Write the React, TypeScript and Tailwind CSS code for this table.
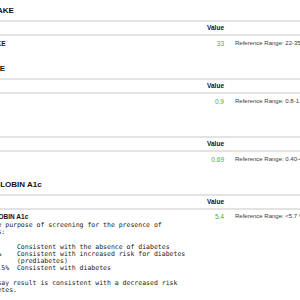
type LabResult = {
  title: string;
  value: string;
  range: string;
  note?: string[];
};

const results: LabResult[] = [
  { title: "T3 UPTAKE", value: "33", range: "Reference Range: 22-35 %" },
  { title: "T4, FREE", value: "0.9", range: "Reference Range: 0.8-1.8 ng/dL" },
  { title: "TSH", value: "0.69", range: "Reference Range: 0.40-4.50 mIU/L" },
  {
    title: "HEMOGLOBIN A1c",
    value: "5.4",
    range: "Reference Range: <5.7 % of total Hgb",
    note: [
      " For the purpose of screening for the presence of",
      "diabetes:",
      "",
      "<5.7%       Consistent with the absence of diabetes",
      "5.7-6.4%    Consistent with increased risk for diabetes",
      "            (prediabetes)",
      "> or =6.5%  Consistent with diabetes",
      "",
      "This assay result is consistent with a decreased risk",
      "of diabetes.",
    ],
  },
];

function ResultSection({ result }: { result: LabResult }) {
  const last = !!result.note;
  return (
    <section className={last ? "pt-[6px]" : "pt-[6px] pb-[8px]"}>
      <h2 className="text-[8px] leading-[10px] font-bold text-[#111]">{result.title}</h2>
      <div className="mt-[4px] grid grid-cols-[214px_40px_1fr] border-y-2 border-[#e3e3e3]">
        <div className="h-[12px]" />
        <div className="text-right text-[6.5px] leading-[12px] font-bold text-[#111]">Value</div>
        <div />
      </div>
      <div
        className={
          "grid grid-cols-[214px_40px_1fr] pt-[1px] " +
          (last ? "leading-[11px]" : "leading-[13px]")
        }
      >
        <div className="text-[6.5px] font-bold text-[#111]">{result.title}</div>
        <div className="text-right text-[6.5px] text-[#3fae49]">{result.value}</div>
        <div className="whitespace-nowrap pl-[11px] text-[6px] text-[#3a3a3a]">{result.range}</div>
      </div>
      {result.note && (
        <pre className="font-['DejaVu_Sans_Mono','Liberation_Mono',monospace] text-[6.5px] leading-[7.2px] text-[#222]">
          {result.note.join("\n")}
        </pre>
      )}
    </section>
  );
}

export default function App() {
  return (
    <div className="h-[300px] w-[300px] overflow-hidden bg-white">
      <div className="-ml-[30px] w-[420px] font-['Liberation_Sans',Arial,sans-serif]">
        {results.map((r) => (
          <ResultSection key={r.title} result={r} />
        ))}
      </div>
    </div>
  );
}
